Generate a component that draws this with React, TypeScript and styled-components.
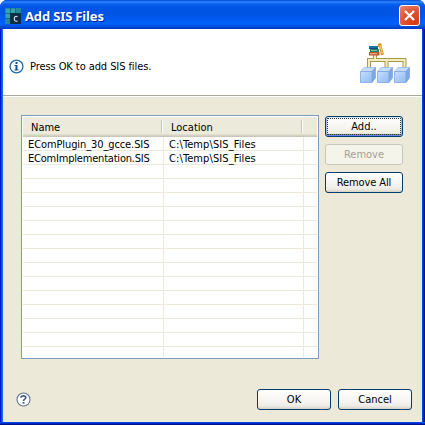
import React from "react";
import styled, { createGlobalStyle } from "styled-components";

const GlobalStyle = createGlobalStyle`
  *, *::before, *::after { box-sizing: border-box; }
  body { margin: 0; background: #fff; overflow: hidden; }
`;

const DialogWindow = styled.div`
  width: 425px;
  height: 425px;
  display: flex;
  flex-direction: column;
  overflow: hidden;
  border-radius: 7px 7px 0 0;
  background: linear-gradient(90deg, #0019cf 0 1px, #0a4ae8 1px 2px, #166aee 2px 3px, #003bda 3px 422px, #0046e6 422px 423px, #0024c0 423px 424px, #00138c 424px);
  font-family: "DejaVu Sans Condensed", "DejaVu Sans", Tahoma, sans-serif;
  font-stretch: condensed;
  font-size: 11px;
  line-height: 14px;
  color: #000;
`;

const TitleBar = styled.header`
  height: 29px;
  flex: none;
  display: flex;
  align-items: center;
  padding: 2px 5px 0 5px;
  background: linear-gradient(180deg, #0046d5 0, #2e86ff 2px, #0a60ee 4px, #0055e5 7px, #0054e3 14px, #005cf5 20px, #0062fa 24px, #0052e0 26px, #0038c0 29px);
`;

const Title = styled.h1`
  flex: 1;
  margin: 0 0 0 4px;
  font-family: "Noto Sans", "Open Sans", sans-serif;
  font-stretch: normal;
  font-size: 13px;
  font-weight: 700;
  line-height: 18px;
  letter-spacing: -0.15px;
  color: #fff;
  text-shadow: 1px 1px 0 #0a1f8c;
`;

const CloseButton = styled.button`
  width: 21px;
  height: 21px;
  padding: 0;
  display: grid;
  place-items: center;
  border: 1px solid #fff;
  border-radius: 3px;
  background: radial-gradient(circle at 80% 90%, #d93a10 0, #e0502e 50%, #e98770 100%);
`;

const Banner = styled.section`
  height: 66px;
  flex: none;
  display: flex;
  align-items: center;
  margin: 0 3px;
  padding: 9px 10px 0 6px;
  background: #fff;
`;

const Message = styled.p`
  flex: 1;
  margin: 0 0 0 6px;
  letter-spacing: -0.08px;
`;

const Divider = styled.div`
  height: 2px;
  flex: none;
  margin: 0 3px;
  background: #fff;
  border-top: 1px solid #aca899;
`;

const Content = styled.main`
  height: 292px;
  flex: none;
  display: flex;
  margin: 0 3px;
  padding: 18px 0 0 18px;
  background: #ece9d8;
`;

const Table = styled.div`
  width: 298px;
  height: 244px;
  padding: 1px;
  border: 1px solid #7f9db9;
  background: #fff;
`;

const HeaderRow = styled.div`
  display: grid;
  grid-template-columns: 140px 140px 1fr;
  height: 20px;
  background: linear-gradient(180deg, #ebeadb 0 17px, #e2decd 17px 18px, #d6d2c2 18px 19px, #cbc7b8 19px);
`;

const HeaderCell = styled.div`
  padding: 4px 0 0 8px;
  background: linear-gradient(90deg, #c7c5b2 0 1px, #fff 1px 2px) no-repeat right 0 top 3px / 2px 13px;
  &:last-child { background: none; }
`;

const Row = styled.div`
  display: grid;
  grid-template-columns: 141px 140px 1fr;
  height: 14px;
  border-bottom: 1px solid #ece9d8;
  &:last-child { border-bottom: 0; height: 10px; }
`;

const Cell = styled.div<{ $spacing?: string }>`
  padding-left: 5px;
  border-right: 1px solid #ece9d8;
  line-height: 15px;
  white-space: nowrap;
  letter-spacing: ${(p) => p.$spacing ?? "0"};
  &:last-child { border-right: 0; }
`;

const SideButtons = styled.div`
  display: flex;
  flex-direction: column;
  gap: 7px;
  margin: 1px 0 0 6px;
`;

const Button = styled.button<{ $width: number; $spacing?: string; $focused?: boolean }>`
  width: ${(p) => p.$width}px;
  height: 21px;
  padding: 0;
  border: 1px solid #003c74;
  border-radius: 3px;
  background: linear-gradient(180deg, #fff 0, #f5f4ef 60%, #ecebe5 85%, #d6d0c5 100%);
  box-shadow: ${(p) => (p.$focused ? "inset 0 1px 0 #cee7ff, inset 1px 0 0 #a2bdee, inset -1px 0 0 #a2bdee, inset 0 -2px 0 #6982ee" : "none")};
  outline: ${(p) => (p.$focused ? "1px dotted #333" : "none")};
  outline-offset: -3px;
  font: inherit;
  line-height: 18px;
  letter-spacing: ${(p) => p.$spacing ?? "0"};
  color: #000;
  &:disabled {
    color: #a1a192;
    border-color: #c9c7ba;
    background: #f5f4ea;
  }
`;

const Footer = styled.footer`
  height: 33px;
  flex: none;
  display: flex;
  align-items: flex-start;
  gap: 7px;
  margin: 0 3px;
  padding-right: 10px;
  background: #ece9d8;
`;

const Help = styled.div`
  flex: 1;
  padding: 3px 0 0 13px;
  svg { display: block; }
`;

const BottomEdge = styled.div`
  height: 3px;
  flex: none;
  background: linear-gradient(180deg, #0648e5 0 1px, #0024c0 1px 2px, #00138c 2px);
`;

const AppIcon = () => (
  <svg width="16" height="16" viewBox="0 0 16 16">
    <path fill="#23899b" d="M0 0h16v16H0z" />
    <path fill="#39a4aa" d="M1 1h4v4H1zM6 1h4v4H6zM1 6h4v4H1z" />
    <path fill="#176b83" d="M5 0h1v16H5zM10 0h1v5h-1zM0 5h16v1H0zM0 10h5v1H0z" />
    <path fill="#093047" d="M5 5h11v11H5z" />
    <path fill="none" stroke="#e6f1f2" strokeWidth="1.100" d="M12.500 8.700C10.500 7.500 9.300 9 9.300 10.800s1.200 3.200 3.200 2.100" />
  </svg>
);

const InfoIcon = () => (
  <svg width="15" height="15" viewBox="0 0 15 15">
    <circle cx="7.5" cy="7.5" r="6.4" fill="#f8fcff" stroke="#2668a4" strokeWidth="1.3" />
    <path fill="#155592" d="M6.500 3h2v2h-2zM5.500 6h3v4.500h1v1h-4v-1h1V7h-1z" />
  </svg>
);

const HelpIcon = () => (
  <svg width="15" height="15" viewBox="0 0 15 15">
    <circle cx="7.5" cy="7.5" r="6.5" fill="#fff" stroke="#607295" strokeWidth="1.1" />
    <path fill="none" stroke="#435d89" strokeWidth="1.700" d="M5 5.800C5 3.200 9.800 3.100 9.800 5.600 9.800 7.300 7.500 7 7.500 9" />
    <path fill="#435d89" d="M6.600 10h1.900v1.800H6.600z" />
  </svg>
);

const TreeGraphic = styled.svg`
  flex: none;
  margin-bottom: 6px;
`;

const Cube = ({ x }: { x: number }) => (
  <g transform={`translate(${x} 24)`} strokeLinejoin="round">
    <path fill="#c3ddfa" stroke="#8fb3e6" strokeWidth=".7" d="M.5 4.500 4 .5h11.500l-3.500 4z" />
    <path fill="#7da8e5" stroke="#7d9fdb" strokeWidth=".7" d="m12 4.500 3.500-4v10.500L12 15.500z" />
    <path fill="url(#cubeFace)" stroke="#7fa5e3" strokeWidth=".8" d="M.5 4.500H12v11H.5z" />
  </g>
);

const TreeIcon = () => (
  <TreeGraphic width="52" height="42" viewBox="0 0 52 42">
    <defs>
      <linearGradient id="cubeFace" x1="0" y1="0" x2="1" y2="1">
        <stop offset="0" stopColor="#c5dffb" />
        <stop offset="1" stopColor="#8fbbf0" />
      </linearGradient>
    </defs>
    <path fill="none" stroke="#a5984f" strokeWidth="4" d="M9 27V17h35.500v10M26.500 17v10M15 12v5" />
    <path fill="none" stroke="#f4edbd" strokeWidth="2" d="M9 27V17h35.500v10M26.500 17v10M15 11v6" />
    <path fill="#1673a5" d="M9 3h9v3H9z" />
    <path fill="#0b507d" d="M9 5h9v1H9z" />
    <path fill="#228567" d="M10 6h9v3h-9z" />
    <path fill="#98cfac" d="M11 7h6v.8h-6z" />
    <path fill="#bd5932" d="M9 9h10.500v3.500H9z" />
    <path fill="#e9a779" d="M10 10h7v1.300h-7z" />
    <path fill="#db8b19" d="m18 1 2.200-1 1.600 1.500-.3 1.500 2.500 8.500-3 .8L19.200 4 18 3.500z" />
    <path stroke="#ffc859" strokeWidth="1.200" d="m20 2 2.500 9" />
    <Cube x={0} />
    <Cube x={17} />
    <Cube x={34} />
  </TreeGraphic>
);

const files = [
  { name: "EComPlugin_30_gcce.SIS", spacing: "-0.1px", location: "C:\\Temp\\SIS_Files" },
  { name: "EComImplementation.SIS", spacing: "-0.2px", location: "C:\\Temp\\SIS_Files" },
];
const emptyRows = Array.from({ length: 14 }, (_, i) => i);

export default function App() {
  return (
    <>
      <GlobalStyle />
      <DialogWindow>
        <TitleBar>
          <AppIcon />
          <Title>Add SIS Files</Title>
          <CloseButton aria-label="Close">
            <svg width="13" height="13" viewBox="0 0 13 13">
              <path d="m2 2 9 9m0-9-9 9" stroke="#fff" strokeWidth="2.200" />
            </svg>
          </CloseButton>
        </TitleBar>
        <Banner>
          <InfoIcon />
          <Message>Press OK to add SIS files.</Message>
          <TreeIcon />
        </Banner>
        <Divider />
        <Content>
          <Table>
            <HeaderRow>
              <HeaderCell>Name</HeaderCell>
              <HeaderCell>Location</HeaderCell>
              <HeaderCell />
            </HeaderRow>
            {files.map((f) => (
              <Row key={f.name}>
                <Cell $spacing={f.spacing}>{f.name}</Cell>
                <Cell $spacing="0.1px">{f.location}</Cell>
                <Cell />
              </Row>
            ))}
            {emptyRows.map((i) => (
              <Row key={i}>
                <Cell />
                <Cell />
                <Cell />
              </Row>
            ))}
          </Table>
          <SideButtons>
            <Button $width={78} $focused>Add..</Button>
            <Button $width={78} disabled>Remove</Button>
            <Button $width={78} $spacing="-0.1px">Remove All</Button>
          </SideButtons>
        </Content>
        <Footer>
          <Help><HelpIcon /></Help>
          <Button $width={74}>OK</Button>
          <Button $width={74}>Cancel</Button>
        </Footer>
        <BottomEdge />
      </DialogWindow>
    </>
  );
}
